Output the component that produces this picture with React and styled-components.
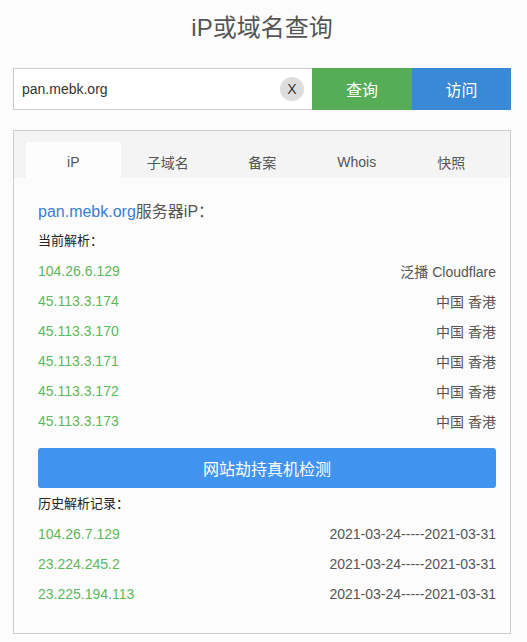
import React, { useState } from "react";
import styled, { createGlobalStyle } from "styled-components";

const GlobalStyle = createGlobalStyle`
    * {
        box-sizing: border-box;
    }
    body {
        margin: 0;
        background: #fcfcfc;
        font-family: "Liberation Sans", Arial, "Noto Sans CJK SC", sans-serif;
        color: #555;
    }
`;

const tabs = ["iP", "子域名", "备案", "Whois", "快照"];

const current = [
    { ip: "104.26.6.129", loc: "泛播 Cloudflare" },
    { ip: "45.113.3.174", loc: "中国 香港" },
    { ip: "45.113.3.170", loc: "中国 香港" },
    { ip: "45.113.3.171", loc: "中国 香港" },
    { ip: "45.113.3.172", loc: "中国 香港" },
    { ip: "45.113.3.173", loc: "中国 香港" },
];

const history = [
    { ip: "104.26.7.129", loc: "2021-03-24-----2021-03-31" },
    { ip: "23.224.245.2", loc: "2021-03-24-----2021-03-31" },
    { ip: "23.225.194.113", loc: "2021-03-24-----2021-03-31" },
];

function App() {
    const [active, setActive] = useState(0);
    return (
        <Page>
            <GlobalStyle />
            <Title>iP或域名查询</Title>
            <SearchBar>
                <InputBox>
                    <Input defaultValue="pan.mebk.org" />
                    <ClearButton>X</ClearButton>
                </InputBox>
                <ActionButton color="#55ae55">查询</ActionButton>
                <ActionButton color="#3a89d7">访问</ActionButton>
            </SearchBar>
            <Card>
                <TabBar>
                    {tabs.map((tab, index) => (
                        <Tab
                            key={index}
                            $active={index === active}
                            onClick={() => setActive(index)}
                        >
                            {tab}
                        </Tab>
                    ))}
                </TabBar>
                <Content>
                    <Heading>
                        <span>pan.mebk.org</span>服务器iP：
                    </Heading>
                    <Label>当前解析：</Label>
                    {current.map((row, index) => (
                        <Row key={index}>
                            <Ip>{row.ip}</Ip>
                            <Info>{row.loc}</Info>
                        </Row>
                    ))}
                    <CheckButton>网站劫持真机检测</CheckButton>
                    <HistoryLabel>历史解析记录：</HistoryLabel>
                    {history.map((row, index) => (
                        <Row key={index}>
                            <Ip>{row.ip}</Ip>
                            <Info>{row.loc}</Info>
                        </Row>
                    ))}
                </Content>
            </Card>
        </Page>
    );
}

const Page = styled.div`
    padding: 0 16px 0 13px;
`;
const Title = styled.h1`
    margin: 0;
    padding-top: 13px;
    height: 68px;
    text-align: center;
    font-size: 24px;
    font-weight: normal;
    color: #555;
    line-height: 30px;
`;
const SearchBar = styled.div`
    display: flex;
    height: 42px;
    margin-bottom: 20px;
`;
const InputBox = styled.div`
    flex: 0 0 299px;
    display: flex;
    align-items: center;
    border: 1px solid #ccc;
    border-right: none;
    background: #fff;
    padding: 0 8px 0 8px;
`;
const Input = styled.input`
    flex: 1;
    min-width: 0;
    border: none;
    outline: none;
    background: transparent;
    font-family: inherit;
    font-size: 14px;
    color: #333;
    padding: 0;
`;
const ClearButton = styled.span`
    width: 24px;
    height: 24px;
    border-radius: 50%;
    background: #ddd;
    color: #333;
    font-size: 14px;
    display: flex;
    align-items: center;
    justify-content: center;
`;
const ActionButton = styled.button`
    flex: 0 0 100px;
    border: none;
    background: ${(p) => p.color};
    color: #fff;
    font-family: inherit;
    font-size: 16px;
    cursor: pointer;
    &:last-child {
        flex-basis: 99px;
    }
`;
const Card = styled.div`
    border: 1px solid #ccc;
    width: 498px;
    height: 504px;
`;
const TabBar = styled.div`
    display: flex;
    background: #f4f4f4;
    padding: 11px 12px 0 12px;
    height: 47px;
`;
const Tab = styled.div`
    flex: 0 0 94.5px;
    display: flex;
    align-items: center;
    justify-content: center;
    padding-top: 3px;
    font-size: 14px;
    color: #555;
    background: ${(p) => (p.$active ? "#fdfdfd" : "transparent")};
    cursor: pointer;
`;
const Content = styled.div`
    padding: 23px 14px 0 24px;
`;
const Heading = styled.div`
    font-size: 16px;
    color: #555;
    line-height: 22px;
    margin-bottom: 8px;
    & span {
        color: #3a7dd6;
    }
`;
const Label = styled.div`
    font-size: 13px;
    color: #222;
    line-height: 20px;
    margin-bottom: 5px;
`;
const HistoryLabel = styled(Label)`
    margin-top: 6px;
`;
const Row = styled.div`
    display: flex;
    justify-content: space-between;
    align-items: center;
    height: 30px;
    font-size: 14px;
`;
const Ip = styled.span`
    color: #5cb85c;
`;
const Info = styled.span`
    color: #555;
`;
const CheckButton = styled.button`
    display: block;
    width: 458px;
    height: 40px;
    margin-top: 12px;
    border: none;
    border-radius: 3px;
    background: #4193f0;
    color: #fff;
    font-family: inherit;
    font-size: 16px;
    cursor: pointer;
`;

export default App;
